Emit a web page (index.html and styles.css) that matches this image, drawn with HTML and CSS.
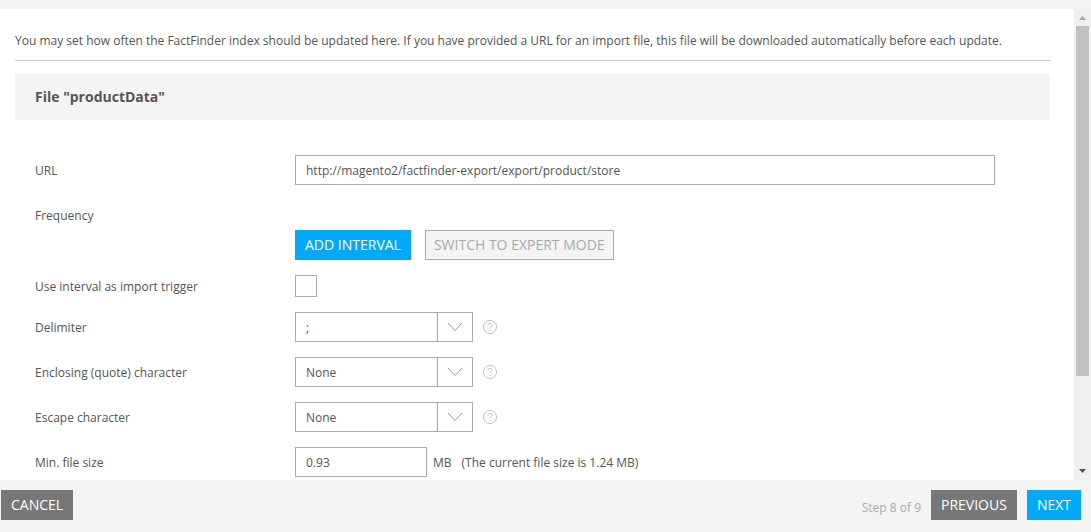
FILE: index.html
```html
<!DOCTYPE html>
<html lang="en">
<head>
<meta charset="utf-8">
<title>Import settings</title>
<link rel="stylesheet" href="styles.css">
</head>
<body>
<div class="viewport">
  <main class="content">
    <p class="intro">You may set how often the FactFinder index should be updated here. If you have provided a URL for an import file, this file will be downloaded automatically before each update.</p>
    <h2 class="section-title">File "productData"</h2>
    <form class="form" id="import-form">
      <div class="row">
        <label class="label" for="url">URL</label>
        <div class="control"><input class="text-input url" id="url" type="text" value="http://magento2/factfinder-export/export/product/store"></div>
      </div>
      <div class="row">
        <span class="label">Frequency</span>
        <div class="control below">
          <button class="btn primary" type="button">ADD INTERVAL</button>
          <button class="btn outline" type="button">SWITCH TO EXPERT MODE</button>
        </div>
      </div>
      <div class="row compact">
        <label class="label" for="trigger">Use interval as import trigger</label>
        <div class="control"><input class="checkbox" id="trigger" type="checkbox"></div>
      </div>
      <div class="row">
        <label class="label" for="delimiter">Delimiter</label>
        <div class="control">
          <div class="select">
            <select id="delimiter"><option>;</option><option>,</option></select>
            <svg class="chevron" viewBox="0 0 34 28"><path d="M10 10l7 7.500 7-7.500"/></svg>
          </div>
          <svg class="help" viewBox="0 0 14 14"><circle cx="7" cy="7" r="6.500"/><path d="M5 5.500V5.200C5 3.900 5.800 3.400 7 3.400S9 4 9 5.100C9 6.600 7 6.500 7 8.500M7 9.800v1.200"/></svg>
        </div>
      </div>
      <div class="row">
        <label class="label" for="quote">Enclosing (quote) character</label>
        <div class="control">
          <div class="select">
            <select id="quote"><option>None</option></select>
            <svg class="chevron" viewBox="0 0 34 28"><path d="M10 10l7 7.500 7-7.500"/></svg>
          </div>
          <svg class="help" viewBox="0 0 14 14"><circle cx="7" cy="7" r="6.500"/><path d="M5 5.500V5.200C5 3.900 5.800 3.400 7 3.400S9 4 9 5.100C9 6.600 7 6.500 7 8.500M7 9.800v1.200"/></svg>
        </div>
      </div>
      <div class="row">
        <label class="label" for="escape">Escape character</label>
        <div class="control">
          <div class="select">
            <select id="escape"><option>None</option></select>
            <svg class="chevron" viewBox="0 0 34 28"><path d="M10 10l7 7.500 7-7.500"/></svg>
          </div>
          <svg class="help" viewBox="0 0 14 14"><circle cx="7" cy="7" r="6.500"/><path d="M5 5.500V5.200C5 3.900 5.800 3.400 7 3.400S9 4 9 5.100C9 6.600 7 6.500 7 8.500M7 9.800v1.200"/></svg>
        </div>
      </div>
      <div class="row">
        <label class="label" for="min-size">Min. file size</label>
        <div class="control">
          <input class="text-input size" id="min-size" type="text" value="0.93">
          <span class="label unit">MB</span>
          <span class="label">(The current file size is 1.24 MB)</span>
        </div>
      </div>
    </form>
  </main>
  <div class="scrollbar" aria-hidden="true">
    <svg class="arrow up" viewBox="0 0 17 17"><path d="M5 11h7L8.500 7z"/></svg>
    <div class="track"><div class="thumb"></div></div>
    <svg class="arrow down" viewBox="0 0 17 17"><path d="M5 6h7l-3.500 4z"/></svg>
  </div>
</div>
<footer class="footer">
  <button class="btn neutral" type="button">CANCEL</button>
  <div class="steps">
    <span class="step">Step 8 of 9</span>
    <button class="btn neutral" type="button">PREVIOUS</button>
    <button class="btn primary" type="button">NEXT</button>
  </div>
</footer>
</body>
</html>
```
FILE: styles.css
```css
* { box-sizing: border-box; }

body {
  margin: 0;
  padding-top: 9px;
  height: 100vh;
  display: flex;
  flex-direction: column;
  background: #f4f4f4;
  color: #555;
  font: 12px/18px "Open Sans", "Noto Sans", sans-serif;
}

.viewport {
  flex: 1;
  min-height: 0;
  display: flex;
  background: #fff;
}

.content {
  flex: 1;
  min-width: 0;
  overflow: hidden;
  padding: 23px 24px 0 15px;
}

.intro {
  margin: 0 0 13px;
  padding-bottom: 10px;
  border-bottom: 1px solid #c8c8c8;
}

.section-title {
  margin: 0 0 35px;
  padding: 0 20px;
  background: #f4f4f4;
  font-size: 14px;
  line-height: 46px;
  font-weight: 700;
}

.form {
  display: flex;
  flex-direction: column;
  gap: 15px;
  padding: 0 20px;
}

.row {
  display: grid;
  grid-template-columns: 260px minmax(0, 700px);
}

.label {
  padding-top: 2px;
  line-height: 28px;
}

.compact .label { line-height: 20px; }

.control {
  display: flex;
  align-items: center;
}

.below {
  padding-top: 30px;
  gap: 14px;
}

.text-input {
  height: 30px;
  padding: 0 10px;
  border: 1px solid #aaa;
  border-radius: 0;
  background: #fff;
  color: inherit;
  font: inherit;
}

.url { width: 100%; }
.size { width: 132px; }
.unit { margin: 0 10px 0 6px; }

.checkbox {
  appearance: none;
  width: 22px;
  height: 22px;
  margin: 0;
  border: 1px solid #aaa;
  background: #fff;
}

.checkbox:checked { background: #03a9f8; }

.select {
  display: grid;
  grid-template-columns: 141px 35px;
  height: 30px;
  border: 1px solid #aaa;
}

.select select {
  grid-area: 1 / 1 / 2 / 3;
  appearance: none;
  margin: 0;
  padding: 2px 45px 0 10px;
  border: 0;
  border-radius: 0;
  background: transparent;
  color: inherit;
  font: inherit;
}

.chevron {
  grid-area: 1 / 2;
  width: 100%;
  height: 28px;
  border-left: 1px solid #aaa;
  fill: none;
  stroke: #999;
  pointer-events: none;
}

.help {
  width: 14px;
  height: 14px;
  margin-left: 10px;
  fill: none;
  stroke: #c0c0c0;
}

.btn {
  height: 30px;
  padding: 0 10px;
  border: 0;
  border-radius: 0;
  color: #fff;
  font: 14px/30px "Open Sans", "Noto Sans", sans-serif;
  white-space: nowrap;
}

.primary { background: #03a9f8; }
.neutral { background: #777; }

.outline {
  padding: 0 8px;
  border: 1px solid #aaa;
  background: #f4f4f4;
  color: #aaa;
  line-height: 28px;
}

.scrollbar {
  width: 17px;
  display: flex;
  flex-direction: column;
  background: #f0f0f0;
}

.arrow { height: 17px; }
.up { fill: #a3a3a3; }
.down { fill: #505050; }

.track {
  flex: 1;
  padding: 0 2px;
}

.thumb {
  height: 80%;
  background: #c1c1c1;
}

.footer {
  display: flex;
  justify-content: space-between;
  padding: 10px 10px 12px 1px;
}

.steps {
  display: flex;
  align-items: flex-end;
  gap: 10px;
}

.step {
  color: #aaa;
  line-height: 24px;
}
```
